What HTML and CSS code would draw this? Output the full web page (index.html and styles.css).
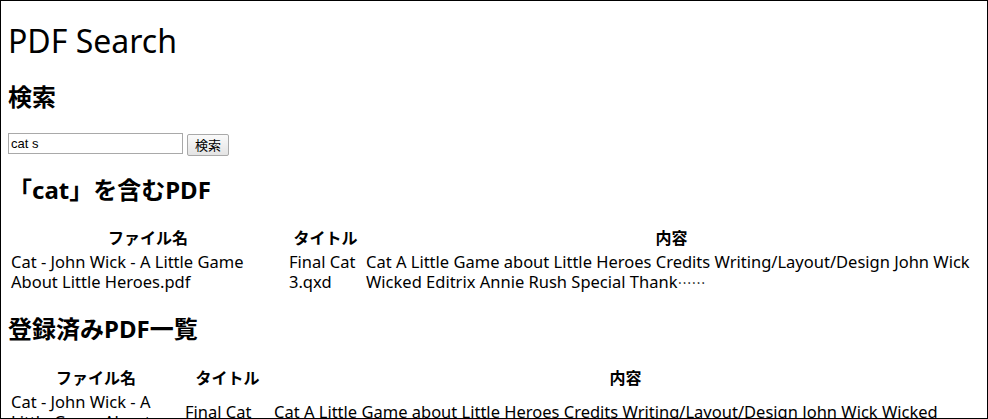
FILE: index.html
```html
<!DOCTYPE html>
<html lang="ja">
<head>
<meta charset="utf-8">
<title>PDF Search</title>
<link rel="stylesheet" href="styles.css">
</head>
<body>
<div class="frame"></div>
<h1>PDF Search</h1>
<h2>検索</h2>
<form class="search">
  <input class="query" type="text" value="cat s">
  <button class="btn" type="button">検索</button>
</form>
<h2>「cat」を含むPDF</h2>
<table class="results t1">
  <thead>
    <tr><th class="c-file">ファイル名</th><th class="c-title">タイトル</th><th class="c-body">内容</th></tr>
  </thead>
  <tbody>
    <tr>
      <td>Cat - John Wick - A Little Game About Little Heroes.pdf</td>
      <td>Final Cat 3.qxd</td>
      <td>Cat A Little Game about Little Heroes Credits Writing/Layout/Design John Wick Wicked Editrix Annie Rush Special Thank<span class="ell">……</span></td>
    </tr>
  </tbody>
</table>
<h2>登録済みPDF一覧</h2>
<table class="results t2">
  <thead>
    <tr><th class="c-file">ファイル名</th><th class="c-title">タイトル</th><th class="c-body">内容</th></tr>
  </thead>
  <tbody>
    <tr>
      <td>Cat - John Wick - A Little Game About Little Heroes.pdf</td>
      <td>Final Cat 3.qxd</td>
      <td>Cat A Little Game about Little Heroes Credits Writing/Layout/Design John Wick Wicked Editrix Annie Rush Special Thanks Anna Kreider<span class="ell">……</span></td>
    </tr>
  </tbody>
</table>
</body>
</html>
```
FILE: styles.css
```css
html, body {
  background: #fff;
  color: #000;
}
body {
  margin: 8px;
  font-family: "Noto Sans", "Noto Sans CJK JP", sans-serif;
  font-size: 16px;
}
.frame {
  position: fixed;
  inset: 0;
  border: 1px solid #000;
  pointer-events: none;
  z-index: 10;
}
h1 {
  font-size: 32px;
  line-height: 37px;
  font-weight: normal;
  margin: 14.4px 0 23.4px;
}
h2 {
  font-size: 24px;
  line-height: 27.6px;
  font-weight: bold;
  margin: 19.92px 0;
}
.search {
  display: flex;
  gap: 4px;
  align-items: flex-start;
  padding: 2.6px 0 0;
}
.query {
  width: 175px;
  height: 21px;
  box-sizing: border-box;
  border: 1px solid #a9a9a9;
  font-family: "Liberation Sans", sans-serif;
  font-size: 13px;
  padding: 1px 2px;
  margin: 0;
}
.btn {
  height: 22px;
  box-sizing: border-box;
  font-family: "Noto Sans CJK JP", sans-serif;
  font-size: 13px;
  line-height: 18px;
  padding: 0 7px;
  border: 1px solid #a9a9a9;
  background: linear-gradient(#fafafa, #e4e4e4);
  border-radius: 2px;
  margin: 1px 0 0;
  color: #000;
}
.results {
  border-collapse: separate;
  border-spacing: 2px;
  width: 100%;
}
.results th, .results td {
  padding: 1px;
}
.results th {
  font-weight: bold;
  font-family: "Noto Sans CJK JP", sans-serif;
  line-height: 22px;
}
.results td {
  font-size: 16.5px;
  line-height: 20px;
}
.ell {
  font-family: "Noto Sans CJK JP", sans-serif;
  font-size: 14px;
  line-height: 1;
}
.t1 .c-file { width: 274px; }
.t1 .c-title { width: 73px; }
.t2 .c-file { width: 170px; }
.t2 .c-title { width: 85px; }
```
